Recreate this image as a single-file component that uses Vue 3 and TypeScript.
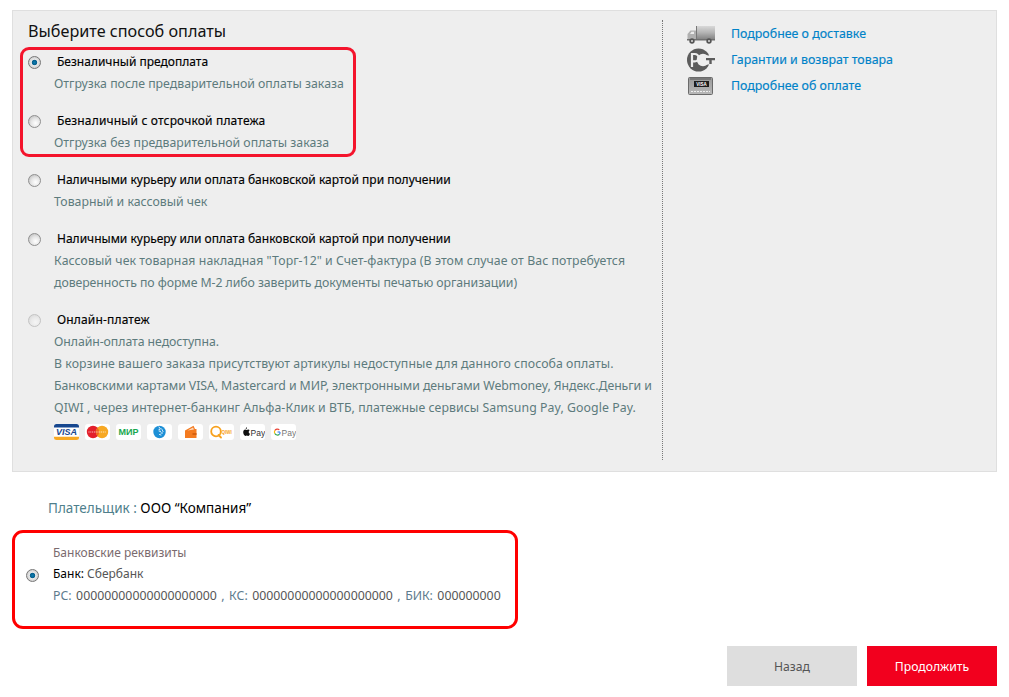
<template>
  <div class="page">
    <section class="panel">
      <div class="methods">
        <h2 class="title">Выберите способ оплаты</h2>
        <div class="highlight">
          <div v-for="m in highlighted" :key="m.name" class="method">
            <span class="radio" :class="{ checked: m.checked }" />
            <div class="method-name" :class="m.nameFit">{{ m.name }}</div>
            <div v-for="line in m.lines" :key="line.text" class="method-line" :class="line.fit">{{ line.text }}</div>
          </div>
        </div>
        <div class="rest">
          <div v-for="(m, i) in others" :key="i" class="method">
            <span class="radio" :class="{ disabled: m.disabled }" />
            <div class="method-name" :class="m.nameFit">{{ m.name }}</div>
            <div v-for="line in m.lines" :key="line.text" class="method-line" :class="line.fit">{{ line.text }}</div>
          </div>
          <div class="pay-icons">
            <svg class="pay" viewBox="0 0 25 16">
              <rect width="25" height="16" rx="2.5" fill="#fff" />
              <path d="M0 3.500V2.500A2.500 2.500 0 0 1 2.500 0h20A2.500 2.500 0 0 1 25 2.500V3.500z" fill="#17478f" />
              <path d="M0 12.800h25V13.500a2.500 2.500 0 0 1-2.500 2.500h-20A2.500 2.500 0 0 1 0 13.500z" fill="#f7a823" />
              <text x="12.500" y="11.300" class="visa" textLength="21" lengthAdjust="spacingAndGlyphs">VISA</text>
            </svg>
            <svg class="pay" viewBox="0 0 25 16">
              <rect width="25" height="16" rx="3" fill="#fff" />
              <circle cx="8" cy="8" r="6.200" fill="#e3202c" />
              <circle cx="17" cy="8" r="6.200" fill="#f7a823" />
              <path d="M12.500 3.800a6.200 6.200 0 0 1 0 8.400a6.200 6.200 0 0 1 0-8.400z" fill="#f0661f" />
              <path d="M3.500 8h18" stroke="#fff" stroke-width="1.200" stroke-dasharray="1 .8" opacity=".75" />
            </svg>
            <svg class="pay" viewBox="0 0 25 16">
              <rect width="25" height="16" rx="3" fill="#fff" />
              <text x="12.500" y="11" class="mir" textLength="20" lengthAdjust="spacingAndGlyphs">МИР</text>
            </svg>
            <svg class="pay" viewBox="0 0 25 16">
              <rect width="25" height="16" rx="3" fill="#fff" />
              <circle cx="12.500" cy="8" r="6.200" fill="#1c8fd6" />
              <path d="M12 3l1 1.500M14 4.500l1 1M15.500 6.500l.5 1M12 7l1.500.5M14 9l1.500 0M12.500 10.500l1.500.5M12 5.500l1 .3" stroke="#fff" stroke-width=".9" stroke-linecap="round" />
            </svg>
            <svg class="pay" viewBox="0 0 25 16">
              <rect width="25" height="16" rx="3" fill="#fff" />
              <path d="M7 6.500L15.500 1.800L17 5H18.500V14H7z" fill="#f47b20" />
              <path d="M9.500 6.500L15 3.500L16 5.500z" fill="#fff" opacity=".7" />
              <path d="M14.500 9h4v2h-4z" fill="#d65f0e" />
            </svg>
            <svg class="pay" viewBox="0 0 25 16">
              <rect width="25" height="16" rx="3" fill="#fff" />
              <circle cx="7" cy="7.500" r="4.800" fill="none" stroke="#f7a11e" stroke-width="1.800" />
              <path d="M9.500 11l2.500 2.500" stroke="#f7a11e" stroke-width="1.800" stroke-linecap="round" />
              <text x="12.500" y="10" class="qiwi">QIWI</text>
            </svg>
            <svg class="pay" viewBox="0 0 25 16">
              <rect width="25" height="16" rx="3" fill="#fff" />
              <path d="M8.300 5.600c-.7 0-1.200.4-1.600.4s-.9-.4-1.500-.4C4.200 5.600 3.200 6.500 3.200 8.200c0 1.700 1.200 3.700 2.200 3.700.5 0 .8-.4 1.400-.4s.8.4 1.400.4c.8 0 1.500-1.200 1.800-2.200-.8-.3-1.300-1-1.300-1.800 0-.7.400-1.300 1-1.600-.4-.4-.9-.7-1.400-.7zM7 3.300c-.7.100-1.300.8-1.200 1.800.8 0 1.300-.9 1.200-1.800z" fill="#111" />
              <text x="10.500" y="11.500" class="pay-text">Pay</text>
            </svg>
            <svg class="pay" viewBox="0 0 25 16">
              <rect width="25" height="16" rx="3" fill="#fff" />
              <path d="M9 8H6.500" stroke="#4285f4" stroke-width="1.200" />
              <path d="M8.300 5.700A3.100 3.100 0 0 0 3.800 6.500" fill="none" stroke="#ea4335" stroke-width="1.200" />
              <path d="M3.800 6.500a3.100 3.100 0 0 0 0 3" fill="none" stroke="#fbbc05" stroke-width="1.200" />
              <path d="M3.800 9.500A3.100 3.100 0 0 0 8.500 10.300" fill="none" stroke="#34a853" stroke-width="1.200" />
              <path d="M8.500 10.300A3.100 3.100 0 0 0 9 8" fill="none" stroke="#4285f4" stroke-width="1.200" />
              <text x="10.500" y="11.500" class="pay-text gray">Pay</text>
            </svg>
          </div>
        </div>
      </div>
      <aside class="links">
        <a class="link">
          <svg class="link-icon" viewBox="0 0 28 24">
            <defs>
              <linearGradient id="cargo" x1="0" y1="0" x2="0" y2="1">
                <stop offset="0" stop-color="#d8d8d8" />
                <stop offset=".5" stop-color="#b4b4b4" />
                <stop offset="1" stop-color="#858585" />
              </linearGradient>
            </defs>
            <rect x="10" y="4" width="18" height="13" fill="url(#cargo)" />
            <path d="M9.500 4v13" stroke="#777" />
            <path d="M.5 17v-5L3.500 8.500H9V17z" fill="#b0b0b0" />
            <path d="M3 12l1.500-2.200H7V12z" fill="#ececec" />
            <rect x="0" y="17" width="28" height="1.500" fill="#6f6f6f" />
            <circle cx="5" cy="19" r="2.700" fill="#555" />
            <circle cx="5" cy="19" r="1" fill="#ddd" />
            <circle cx="22" cy="19" r="2.700" fill="#555" />
            <circle cx="22" cy="19" r="1" fill="#ddd" />
          </svg>
          Подробнее о доставке
        </a>
        <a class="link">
          <svg class="link-icon" viewBox="0 0 28 24">
            <circle cx="11.500" cy="12" r="11.500" fill="#5c5c5c" />
            <circle cx="16" cy="12" r="6.200" fill="#eee" />
            <rect x="16" y="7.500" width="8" height="9" fill="#eee" />
            <path d="M5 19V6h2.800a3.700 3.700 0 0 1 0 7.400H5" fill="none" stroke="#eee" stroke-width="2.200" />
            <path d="M19 10h9v2.200h-3.300V16h-2.400v-3.800H19z" fill="#5c5c5c" />
          </svg>
          Гарантии и возврат товара
        </a>
        <a class="link">
          <svg class="link-icon" viewBox="0 0 28 24">
            <defs>
              <linearGradient id="card" x1="0" y1="0" x2="0" y2="1">
                <stop offset="0" stop-color="#9a9a9a" />
                <stop offset="1" stop-color="#b8b8b8" />
              </linearGradient>
            </defs>
            <rect x="1.500" y="3.500" width="24" height="17" rx="1" fill="url(#card)" stroke="#6a6a6a" />
            <path d="M3 5h21" stroke="#555" />
            <rect x="7" y="7" width="15" height="6" fill="#1d1d1d" />
            <text x="14.500" y="11.500" class="card-text">VISA</text>
            <path d="M4 17.500h19" stroke="#eee" stroke-dasharray="2 1" />
          </svg>
          Подробнее об оплате
        </a>
      </aside>
    </section>

    <div class="payer"><span class="payer-label">Плательщик :</span> ООО “Компания”</div>

    <div class="bank">
      <span class="radio checked" />
      <div class="bank-text">
        <div class="bank-heading">Банковские реквизиты</div>
        <div class="bank-name"><span>Банк:</span> Сбербанк</div>
        <div class="bank-codes">
          <span class="code-key">РС:</span> 00000000000000000000 <span class="code-key">, КС:</span> 00000000000000000000 <span class="code-key">, БИК:</span> 000000000
        </div>
      </div>
    </div>

    <div class="actions">
      <button class="btn btn-back" type="button">Назад</button>
      <button class="btn btn-next" type="button">Продолжить</button>
    </div>
  </div>
</template>

<script setup lang="ts">
type Fit = 'fit-wide' | 'fit-narrow'

type Line = {
  text: string
  fit?: Fit
}

type Method = {
  name: string
  lines: Line[]
  nameFit?: Fit
  checked?: boolean
  disabled?: boolean
}

const highlighted: Method[] = [
  {
    name: 'Безналичный предоплата',
    lines: [{ text: 'Отгрузка после предварительной оплаты заказа' }],
    checked: true,
  },
  {
    name: 'Безналичный с отсрочкой платежа',
    nameFit: 'fit-wide',
    lines: [{ text: 'Отгрузка без предварительной оплаты заказа' }],
  },
]

const others: Method[] = [
  {
    name: 'Наличными курьеру или оплата банковской картой при получении',
    lines: [{ text: 'Товарный и кассовый чек' }],
  },
  {
    name: 'Наличными курьеру или оплата банковской картой при получении',
    lines: [
      { text: 'Кассовый чек товарная накладная "Торг-12" и Счет-фактура (В этом случае от Вас потребуется', fit: 'fit-wide' },
      { text: 'доверенность по форме М-2 либо заверить документы печатью организации)', fit: 'fit-narrow' },
    ],
  },
  {
    name: 'Онлайн-платеж',
    nameFit: 'fit-wide',
    disabled: true,
    lines: [
      { text: 'Онлайн-оплата недоступна.', fit: 'fit-narrow' },
      { text: 'В корзине вашего заказа присутствуют артикулы недоступные для данного способа оплаты.', fit: 'fit-wide' },
      { text: 'Банковскими картами VISA, Mastercard и МИР, электронными деньгами Webmoney, Яндекс.Деньги и', fit: 'fit-narrow' },
      { text: 'QIWI , через интернет-банкинг Альфа-Клик и ВТБ, платежные сервисы Samsung Pay, Google Pay.', fit: 'fit-wide' },
    ],
  },
]
</script>

<style>
body {
  background: #fff;
}
</style>

<style scoped>
.page {
  width: 1009px;
  height: 697px;
  box-sizing: border-box;
  padding: 10px 12px 0;
  overflow: hidden;
  font-family: "Noto Sans", "Liberation Sans", sans-serif;
  font-size: 12.3px;
  line-height: 22px;
  white-space: nowrap;
  color: #5d7b7d;
}

.panel {
  display: flex;
  height: 462px;
  box-sizing: border-box;
  border: 1px solid #dfdfdf;
  background: #eee;
}

.methods {
  width: 650px;
  height: 440px;
  margin-top: 9px;
  box-sizing: border-box;
  border-right: 1px dotted #777;
}

.title {
  margin: -1px 0 0 15px;
  font-size: 16.2px;
  font-weight: 400;
  line-height: 24px;
  color: #111;
}

.highlight {
  width: 336px;
  height: 110px;
  box-sizing: border-box;
  margin: 4px 0 0 7px;
  padding: 1px 0 0 31px;
  border: 3px solid #f4142c;
  border-radius: 9px;
}

.rest {
  padding: 1px 0 0 41px;
  margin-top: 11px;
}

.method {
  position: relative;
  margin-bottom: 15px;
}

.method-name {
  padding-left: 3px;
  font-size: 12px;
  color: #000;
  -webkit-text-stroke: 0.15px #000;
}

.fit-wide {
  letter-spacing: 0.07px;
}

.method-name.fit-wide {
  letter-spacing: 0.16px;
}

.fit-narrow {
  letter-spacing: -0.07px;
}

.radio {
  position: absolute;
  left: -26px;
  top: 5px;
  width: 13px;
  height: 13px;
  box-sizing: border-box;
  border: 1px solid #8f8f8f;
  border-radius: 50%;
  background: radial-gradient(circle at 60% 65%, #fff 0, #e6e6e6 45%, #b4b4b4 100%);
}

.radio.checked {
  background: radial-gradient(circle, #0a7cb0 0, #07608e 30%, #e8e8e8 40%, #bdbdbd 100%);
  border-color: #777;
}

.radio.disabled {
  opacity: 0.45;
}

.pay-icons {
  display: flex;
  gap: 6px;
  margin-top: -10px;
}

.pay {
  width: 25px;
  height: 16px;
  flex: none;
}

.pay text {
  font-family: "Liberation Sans", sans-serif;
  text-anchor: middle;
}

.pay .visa {
  font-size: 8.5px;
  font-weight: 700;
  font-style: italic;
  fill: #17478f;
}

.pay .mir {
  font-size: 8.5px;
  font-weight: 700;
  fill: #1aa84f;
}

.pay .qiwi {
  font-size: 4.5px;
  font-weight: 700;
  fill: #f7a11e;
  text-anchor: start;
}

.pay .pay-text {
  font-size: 8.5px;
  fill: #333;
  text-anchor: start;
}

.pay .pay-text.gray {
  fill: #777;
}

.links {
  display: flex;
  flex-direction: column;
  gap: 2px;
  padding: 11px 0 0 24px;
}

.link {
  display: flex;
  align-items: center;
  gap: 16px;
  height: 24px;
  font-size: 12.4px;
  color: #0082c8;
  -webkit-text-stroke: 0.15px #0082c8;
}

.link-icon {
  width: 28px;
  height: 24px;
  flex: none;
}

.card-text {
  font-family: "Liberation Sans", sans-serif;
  font-size: 4.5px;
  font-weight: 700;
  fill: #fff;
  text-anchor: middle;
}

.payer {
  margin: 24px 0 0 36px;
  font-size: 13.5px;
  line-height: 24px;
  color: #000;
}

.payer-label {
  color: #4f7f8c;
}

.bank {
  position: relative;
  width: 506px;
  height: 99px;
  box-sizing: border-box;
  margin-top: 10px;
  padding: 9px 0 0 38px;
  border: 3px solid #f00;
  border-radius: 11px;
}

.bank .radio {
  left: 11px;
  top: 36px;
}

.bank-heading {
  line-height: 21px;
  font-size: 12px;
  color: #7a6a6e;
}

.bank-name {
  font-size: 12px;
  color: #555;
}

.bank-name span {
  color: #000;
}

.bank-codes {
  word-spacing: 1.3px;
  color: #555;
}

.code-key {
  color: #5d7b8d;
}

.actions {
  display: flex;
  justify-content: flex-end;
  gap: 10px;
  margin-top: 17px;
}

.btn {
  width: 130px;
  height: 40px;
  border: none;
  font-family: inherit;
  font-size: 12.2px;
  cursor: pointer;
}

.btn-back {
  background: #dedede;
  color: #555;
}

.btn-next {
  background: #f2001e;
  color: #fff;
}
</style>
